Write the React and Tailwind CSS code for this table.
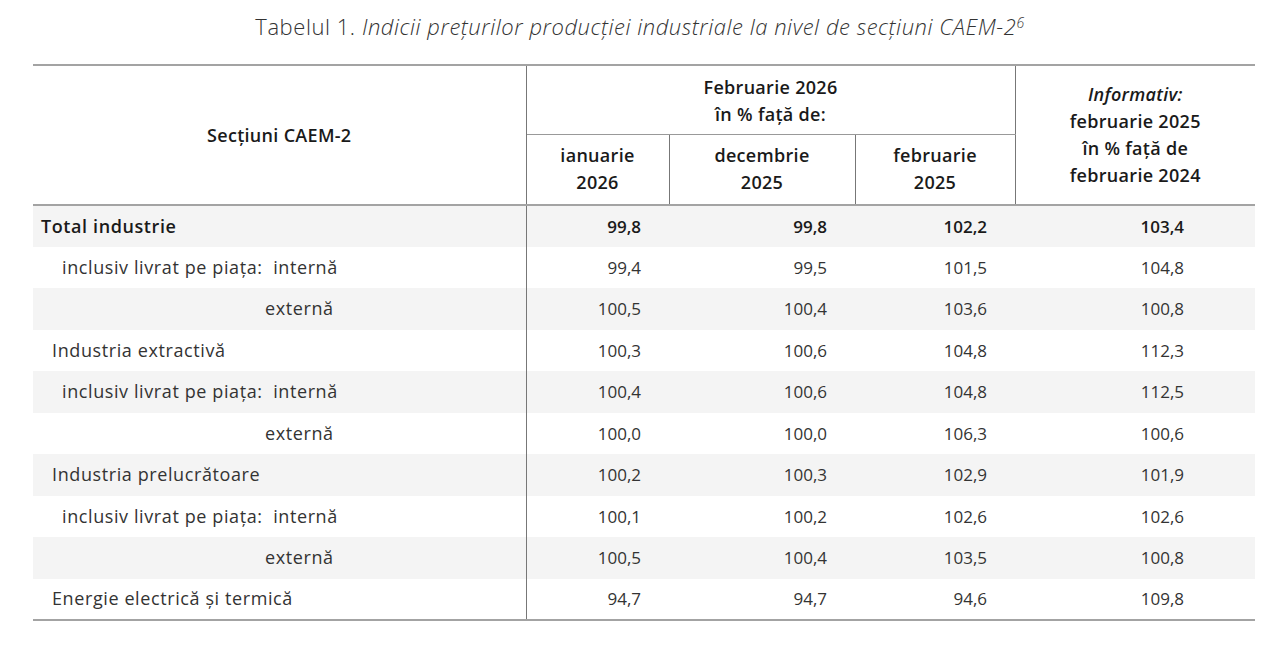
const rows = [
  { label: 'Total industrie', indent: 'pl-2', bold: true, v: ['99,8', '99,8', '102,2', '103,4'] },
  { label: 'inclusiv livrat pe piața:\u00a0\u00a0internă', indent: 'pl-[29px]', v: ['99,4', '99,5', '101,5', '104,8'] },
  { label: 'externă', indent: 'pl-[232px]', v: ['100,5', '100,4', '103,6', '100,8'] },
  { label: 'Industria extractivă', indent: 'pl-[19px]', v: ['100,3', '100,6', '104,8', '112,3'] },
  { label: 'inclusiv livrat pe piața:\u00a0\u00a0internă', indent: 'pl-[29px]', v: ['100,4', '100,6', '104,8', '112,5'] },
  { label: 'externă', indent: 'pl-[232px]', v: ['100,0', '100,0', '106,3', '100,6'] },
  { label: 'Industria prelucrătoare', indent: 'pl-[19px]', v: ['100,2', '100,3', '102,9', '101,9'] },
  { label: 'inclusiv livrat pe piața:\u00a0\u00a0internă', indent: 'pl-[29px]', v: ['100,1', '100,2', '102,6', '102,6'] },
  { label: 'externă', indent: 'pl-[232px]', v: ['100,5', '100,4', '103,5', '100,8'] },
  { label: 'Energie electrică și termică', indent: 'pl-[19px]', v: ['94,7', '94,7', '94,6', '109,8'] },
];

export default function App() {
  return (
    <div className="w-[1280px] h-[645px] bg-white text-[#2b2b2b] font-['Open_Sans','Lato',sans-serif]">
      {/* Caption */}
      <p className="pt-[10px] h-[64px] text-center text-[22px] tracking-[0.55px] font-light text-[#333]">
        Tabelul 1. <i>Indicii prețurilor producției industriale la nivel de secțiuni CAEM-2</i>
        <sup className="italic text-[14px]">6</sup>
      </p>

      <table className="ml-[33px] w-[1222px] border-collapse table-fixed text-[17px]">
        <colgroup>
          <col className="w-[493px]" />
          <col className="w-[143px]" />
          <col className="w-[186px]" />
          <col className="w-[160px]" />
          <col className="w-[240px]" />
        </colgroup>
        <thead className="text-[18px] tracking-[0.3px] text-[#1a1a1a] leading-[27px]">
          <tr className="h-[69px] border-t-2 border-[#a3a3a3]">
            <th rowSpan={2} className="font-semibold border-r border-[#777]">Secțiuni CAEM-2</th>
            <th colSpan={3} className="font-semibold border-r border-b border-[#777] border-b-[#999] pt-[2px]">
              Februarie 2026<br />în % față de:
            </th>
            <th rowSpan={2} className="font-semibold">
              <i>Informativ:</i><br />februarie 2025<br />în % față de<br />februarie 2024
            </th>
          </tr>
          <tr className="h-[71px] border-b-2 border-[#a3a3a3]">
            <th className="font-semibold border-r border-[#777]">ianuarie<br />2026</th>
            <th className="font-semibold border-r border-[#777]">decembrie<br />2025</th>
            <th className="font-semibold border-r border-[#777]">februarie<br />2025</th>
          </tr>
        </thead>
        <tbody className="border-b-2 border-[#a3a3a3]">
          {rows.map((r, i) => (
            <tr key={i} className={`h-[41.5px] ${i % 2 === 0 ? 'bg-[#f4f4f4]' : 'bg-white'} ${r.bold ? 'font-semibold text-[#1a1a1a]' : 'font-normal text-[#333]'}`}>
              <td className={`${r.indent} text-[18px] tracking-[0.6px] border-r border-[#777]`}>{r.label}</td>
              <td className="text-right pr-[28px]">{r.v[0]}</td>
              <td className="text-right pr-[28px]">{r.v[1]}</td>
              <td className="text-right pr-[28px]">{r.v[2]}</td>
              <td className="text-right pr-[71px]">{r.v[3]}</td>
            </tr>
          ))}
        </tbody>
      </table>
    </div>
  );
}
